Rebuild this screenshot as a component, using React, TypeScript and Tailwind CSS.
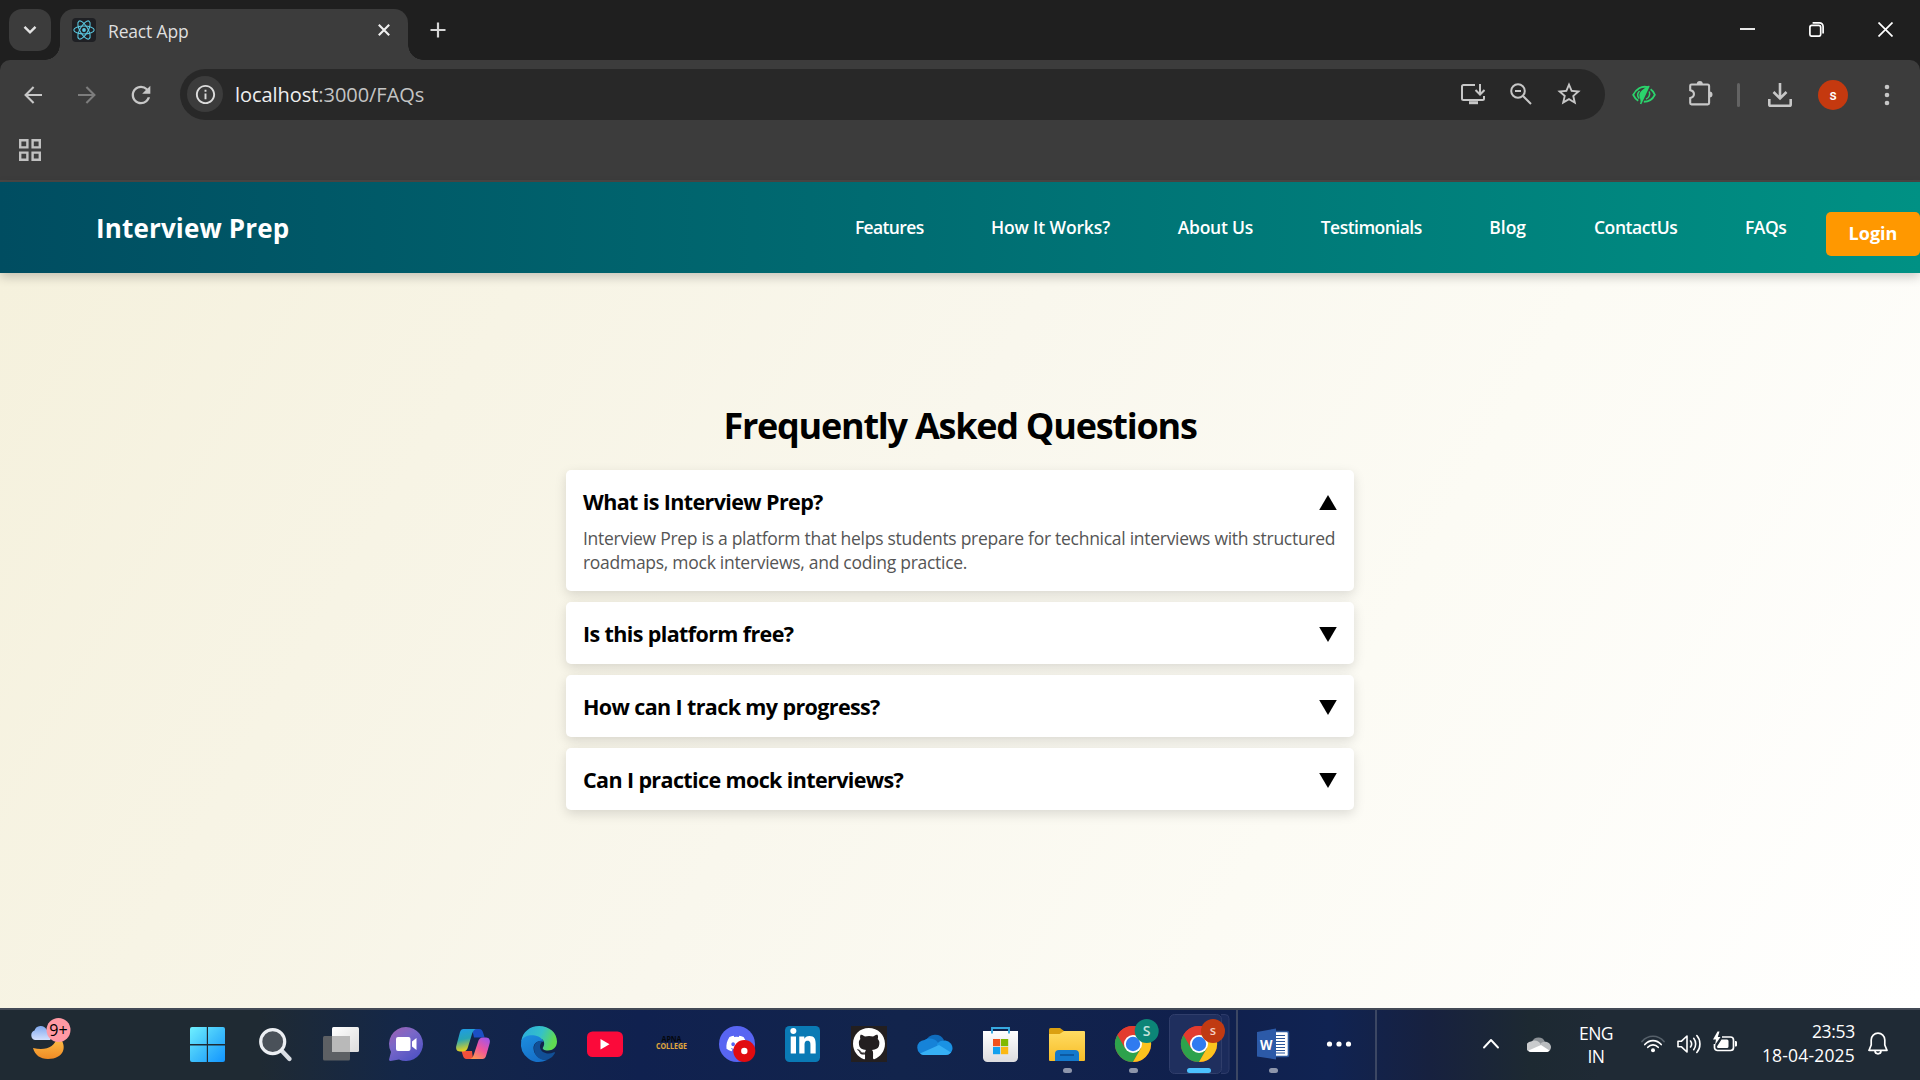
import React, { useState } from "react";
import { FaGithub, FaDiscord, FaLinkedinIn } from "react-icons/fa6";
import { MdStarBorder, MdRefresh, MdOutlineInfo } from "react-icons/md";

function ReactLogo() {
  return (
    <svg viewBox="0 0 24 24" className="h-6 w-6 rounded-sm bg-[#1f2024]" fill="none" stroke="#5ac8e0" strokeWidth="1.1">
      <ellipse cx="12" cy="12" rx="10.2" ry="4" />
      <ellipse cx="12" cy="12" rx="10.2" ry="4" transform="rotate(60 12 12)" />
      <ellipse cx="12" cy="12" rx="10.2" ry="4" transform="rotate(120 12 12)" />
      <circle cx="12" cy="12" r="1.9" fill="#5ac8e0" stroke="none" />
    </svg>
  );
}

function TabStrip() {
  return (
    <div className="flex h-[60px] items-start bg-[#1f1f1f]">
      <button className="mt-[9px] ml-[9px] flex h-[42px] w-[42px] items-center justify-center rounded-[13px] bg-[#3c3c3c]">
        <svg viewBox="0 0 14 10" className="h-[10px] w-[14px]" fill="none" stroke="#e3e3e3" strokeWidth="2.4">
          <path d="M1.5 1.8 7 7.3l5.5-5.5" />
        </svg>
      </button>
      <div className="relative mt-[9px] ml-[9px] flex h-[51px] w-[348px] items-start rounded-t-[14px] bg-[#3c3c3c] pt-[9px] pl-3">
        <span className="absolute bottom-0 -left-[15px] h-[15px] w-[15px] bg-[radial-gradient(circle_at_0_0,transparent_14.5px,#3c3c3c_15px)]" />
        <span className="absolute -right-[15px] bottom-0 h-[15px] w-[15px] bg-[radial-gradient(circle_at_100%_0,transparent_14.5px,#3c3c3c_15px)]" />
        <ReactLogo />
        <span className="mt-[1px] ml-3 w-[240px] text-[17.5px] leading-6 tracking-[-0.17px] whitespace-nowrap text-[#dfdfdf]">React App</span>
        <svg viewBox="0 0 12 12" className="mt-[6px] ml-[30px] h-3 w-3" stroke="#f0f0f0" strokeWidth="2.1">
          <path d="M.8.8l10.4 10.4M11.2.8.8 11.2" />
        </svg>
      </div>
      <svg viewBox="0 0 16 16" className="mt-[22px] ml-[22px] h-4 w-4" stroke="#d6d6d6" strokeWidth="2.2">
        <path d="M8 .5v15M.5 8h15" />
      </svg>
      <div className="mt-[22px] mr-[27px] ml-auto flex gap-[54px]">
        <svg viewBox="0 0 15 15" className="h-[15px] w-[15px]" stroke="#fff" strokeWidth="1.8"><path d="M0 7h15" /></svg>
        <svg viewBox="0 0 15 15" className="h-[15px] w-[15px]" fill="none" stroke="#fff" strokeWidth="1.7">
          <rect x=".9" y="3.4" width="10.8" height="10.8" rx="2" />
          <path d="M3.6.9h6.9a3.6 3.6 0 0 1 3.6 3.6v7" />
        </svg>
        <svg viewBox="0 0 15 15" className="h-[15px] w-[15px]" stroke="#fff" strokeWidth="1.7"><path d="M.5.5l14 14M14.5.5l-14 14" /></svg>
      </div>
    </div>
  );
}

function Toolbar() {
  return (
    <div className="bg-[#1f1f1f]">
      <div className="flex h-[70px] items-start rounded-t-[10px] bg-[#3c3c3c] pt-[9px]">
        <svg viewBox="0 0 18 18" className="mt-[17px] ml-6 h-[18px] w-[18px]" fill="none" stroke="#c7c7c7" strokeWidth="2.1">
          <path d="M18 9H2M9.6 1 1.6 9l8 8" />
        </svg>
        <svg viewBox="0 0 18 18" className="mt-[17px] ml-9 h-[18px] w-[18px]" fill="none" stroke="#7d7d7d" strokeWidth="2.1">
          <path d="M0 9h16M8.4 1l8 8-8 8" />
        </svg>
        <MdRefresh className="mt-[12px] ml-[31px] h-[28px] w-[28px] text-[#c7c7c7]" />
        <div className="ml-[25px] flex h-[51px] w-[1425px] items-start rounded-full bg-[#282828]">
          <div className="mt-[7px] ml-[7px] flex h-9 w-9 items-center justify-center rounded-full bg-[#3c3c3c]">
            <MdOutlineInfo className="h-[23px] w-[23px] text-[#dcdcdc]" />
          </div>
          <span className="mt-[11px] ml-[12px] w-[1216px] text-[20px] leading-[30px] tracking-[-0.05px] whitespace-nowrap text-[#c4c4c4]">
            <span className="text-[#efefef]">localhost</span>:3000/FAQs
          </span>
          <svg viewBox="0 0 24 22" className="mt-[14px] ml-[10px] h-[22px] w-6 shrink-0" fill="none" stroke="#c7c7c7" strokeWidth="2">
            <path d="M14 2H2.5A1.5 1.5 0 0 0 1 3.5v12A1.5 1.5 0 0 0 2.5 17h19a1.5 1.5 0 0 0 1.5-1.5V13" />
            <path d="M8 19.7h9" strokeWidth="3" />
            <path d="M19 1v10M14.5 7l4.5 4.5L23.5 7" />
          </svg>
          <svg viewBox="0 0 22 22" className="mt-[14px] ml-[25px] h-[22px] w-[22px] shrink-0" fill="none" stroke="#c7c7c7" strokeWidth="2">
            <circle cx="8" cy="8" r="6.8" />
            <path d="M5 8h6M13 13l8 8" />
          </svg>
          <MdStarBorder className="mt-[11px] ml-[23px] h-[28px] w-[28px] shrink-0 text-[#c7c7c7]" />
        </div>
        <svg viewBox="0 0 24 20" className="mt-[16px] ml-[27px] h-5 w-6" fill="none" stroke="#2bd46c" strokeWidth="1.9">
          <path d="M16 2.2C9.5.2 3.8 4.4 1.2 9.8c1.3 2.7 3 4.700 5 6" />
          <path d="M7.5 6c-2.3 2.6-2.2 5.6-.2 7.6" strokeWidth="1.5" />
          <path d="M17.3.6 9 18.4 8 13C5.8 8.5 9.5 4.5 17.3.6Z" fill="#2bd46c" stroke="none" />
          <path d="M18.6 4.3c2 1.3 3.4 3.2 4.2 5.5-2.2 4.4-6.2 7-11 7" />
          <path d="M17.2 6.5c1.3 3-.3 6.4-3.2 7.6" strokeWidth="1.5" />
          <path d="M17 1 8.6 19" strokeWidth="1.6" />
        </svg>
        <svg viewBox="0 0 26 26" className="mt-[11px] ml-[32px] h-[26px] w-[26px]" fill="none" stroke="#c7c7c7" strokeWidth="2.1">
          <path d="M3.5 4.500h16a1.6 1.6 0 0 1 1.600 1.600v17a1.300 1.300 0 0 1-1.300 1.300H3.500a1.300 1.300 0 0 1-1.300-1.300v-5c5-1 5-7 0-8V5.800A1.300 1.300 0 0 1 3.500 4.500Z" />
          <path d="M8.800 4a3 3 0 0 1 6 0ZM21.500 11.500a3 3 0 0 1 0 6Z" fill="#c7c7c7" stroke="none" />
        </svg>
        <div className="mt-[14px] ml-[23px] h-6 w-[3px] rounded-sm bg-[#636363]" />
        <svg viewBox="0 0 24 24" className="mt-[14px] ml-[28px] h-6 w-6" fill="none" stroke="#c7c7c7" strokeWidth="2.6">
          <path d="M12 0v15M5.500 9l6.500 6.500L18.500 9M1.300 16v5.400a1.300 1.300 0 0 0 1.300 1.300h18.800a1.300 1.300 0 0 0 1.300-1.300V16" />
        </svg>
        <div className="mt-[11px] ml-[26px] flex h-[30px] w-[30px] items-center justify-center rounded-full bg-[#c5390f] font-[Roboto,sans-serif] text-[14px] font-medium text-white">s</div>
        <svg viewBox="0 0 6 22" className="mt-[15px] ml-9 h-[22px] w-[6px]" fill="#c7c7c7">
          <circle cx="3" cy="3" r="2.300" /><circle cx="3" cy="11" r="2.300" /><circle cx="3" cy="19" r="2.300" />
        </svg>
      </div>
      <div className="flex h-[52px] items-start border-b-2 border-[#4a4644] bg-[#3c3c3c] pt-[9px] pl-[19px]">
        <svg viewBox="0 0 22 22" className="h-[22px] w-[22px]" fill="none" stroke="#c0c0c0" strokeWidth="2.4">
          <path d="M1.200 1.200h7.200v7.200H1.200zM13.600 1.200h7.200v7.200h-7.200zM1.200 13.600h7.200v7.200H1.200zM13.600 13.600h7.200v7.200h-7.200z" />
        </svg>
      </div>
    </div>
  );
}

const links = [
  { label: "Features", box: "w-[68.5px] tracking-[-0.64px]" },
  { label: "How It Works?", box: "w-[119px] tracking-[-0.14px]" },
  { label: "About Us", box: "w-[75.5px] tracking-[-0.22px]" },
  { label: "Testimonials", box: "w-[101px] tracking-[-0.52px]" },
  { label: "Blog", box: "w-[37px] tracking-[-0.05px]" },
  { label: "ContactUs", box: "w-[83.5px] tracking-[-0.4px]" },
  { label: "FAQs", box: "w-[41px] tracking-[-0.5px]" },
];

function SiteNav() {
  return (
    <nav className="relative flex h-[91px] items-start bg-linear-to-r from-[#004d61] to-[#009184] text-white shadow-[0_4px_10px_rgba(0,0,0,0.2)]">
      <div className="mt-[28px] ml-[96px] text-[26px] leading-9 font-bold tracking-[0.15px] whitespace-nowrap">Interview Prep</div>
      <div className="ml-auto flex gap-[67.6px]">
        {links.map((l) => (
          <a key={l.label} href="#" className={"mt-[33px] text-[17.5px] leading-6 font-semibold whitespace-nowrap " + l.box}>{l.label}</a>
        ))}
      </div>
      <button className="mt-[30px] ml-[40px] flex h-11 w-[94px] justify-center rounded-[5px] bg-[#ff9800] pt-[9px] text-[18px] leading-6 font-bold">Login</button>
    </nav>
  );
}

const faqs = [
  { q: "What is Interview Prep?", a: "Interview Prep is a platform that helps students prepare for technical interviews with structured roadmaps, mock interviews, and coding practice." },
  { q: "Is this platform free?", a: "Yes, the core roadmaps and practice sets are free." },
  { q: "How can I track my progress?", a: "Your dashboard shows progress through every roadmap." },
  { q: "Can I practice mock interviews?", a: "Yes, mock interviews can be scheduled at any time." },
];

function Faqs() {
  const [open, setOpen] = useState(0);
  return (
    <main className="flex h-[735px] flex-col items-center bg-[linear-gradient(120deg,#f5f1dd_0%,#f9f7ed_45%,#fcfbf4_68%,#ffffff_100%)] pt-[126px]">
      <h1 className="h-[71px] text-[36px] leading-[54px] font-bold tracking-[-1.25px] [font-stretch:90%] whitespace-nowrap text-black">Frequently Asked Questions</h1>
      <div className="flex w-[788px] flex-col gap-[11px]">
        {faqs.map((f, i) => (
          <section key={f.q} className="rounded-[5px] bg-white px-[17px] pt-[17px] pb-[15px] shadow-[0_4px_12px_rgba(0,0,0,0.13)]">
            <button onClick={() => setOpen(open === i ? -1 : i)} className="flex h-[30px] w-full items-center justify-between text-left text-black">
              <span className="text-[21.5px] leading-[30px] font-bold tracking-[-0.62px] whitespace-nowrap">{f.q}</span>
              <svg viewBox="0 0 18 15" className={open === i ? "h-[15px] w-[18px]" : "h-[15px] w-[18px] rotate-180"}>
                <path d="M9 0 17.800 15H.200Z" />
              </svg>
            </button>
            {open === i && (
              <p className="mt-[9px] mb-[2px] -mr-2 text-[17.5px] leading-6 tracking-[-0.28px] text-[#555]">{f.a}</p>
            )}
          </section>
        ))}
      </div>
    </main>
  );
}

function Cell({ children }: { children: React.ReactNode }) {
  return <svg viewBox="0 0 66 70" className="h-[70px] w-[66px] shrink-0 font-['Open_Sans',sans-serif]">{children}</svg>;
}

function ChromeIcon() {
  return (
    <g transform="translate(34 34)">
      <circle r="18" fill="#e33b2e" />
      <path d="M0 0-15.600-9A18 18 0 0 0 0 18L7.800 4.500Z" fill="#2da24c" />
      <path d="M0-9H15.600A18 18 0 0 1 0 18L7.800 4.500Z" fill="#fcc31e" />
      <path d="M-15.600-9A18 18 0 0 1 15.600-9H0L-7.800 4.500Z" fill="#e33b2e" />
      <circle r="9" fill="#fff" />
      <circle r="7.200" fill="#2f7bf0" />
    </g>
  );
}

function Taskbar() {
  return (
    <footer className="flex h-[72px] items-start border-t-2 border-[#434a56] bg-[linear-gradient(90deg,#1f2a33_0px,#1f2a33_260px,#142748_400px,#10214f_640px,#12244c_900px,#10204d_1200px,#102352_1330px,#17213f_1430px,#1d2932_1530px,#1f2a35_1600px)]">
      <svg viewBox="0 0 175 70" className="h-[70px] w-[175px] shrink-0 font-['Open_Sans',sans-serif]">
        <defs>
          <linearGradient id="moon" x2="0" y2="1"><stop stopColor="#ffc24a" /><stop offset="1" stopColor="#f08a24" /></linearGradient>
          <linearGradient id="cloud" x2="0" y2="1"><stop stopColor="#7fa8ee" /><stop offset="1" stopColor="#d3dffc" /></linearGradient>
        </defs>
        <path d="M59 27c9 9 5 22-11 22-8 0-13-4-15-11 13 3 22-1 24-11Z" fill="url(#moon)" />
        <path d="M35 30a5 5 0 0 1-.5-9.500 6.500 6.500 0 0 1 12-1A6 6 0 0 1 50 30Z" fill="url(#cloud)" />
        <circle cx="58.500" cy="20" r="12" fill="#ff99a4" />
        <text x="58.500" y="25.500" fontSize="16" textAnchor="middle" fill="#000">9+</text>
      </svg>
      <Cell>
        <defs><linearGradient id="win" gradientUnits="userSpaceOnUse" x1="15" y1="17" x2="50" y2="52"><stop stopColor="#6ff0ff" /><stop offset=".5" stopColor="#3fc0fb" /><stop offset="1" stopColor="#1295ff" /></linearGradient></defs>
        <path d="M17 17h14.800v17H15V19a2 2 0 0 1 2-2ZM33 17h15a2 2 0 0 1 2 2v15H33ZM15 35.500h16.800V52H17a2 2 0 0 1-2-2ZM33 35.500h17V50a2 2 0 0 1-2 2H33Z" fill="url(#win)" />
      </Cell>
      <Cell>
        <path d="m41 41 7.500 8" stroke="#d9dee4" strokeWidth="4.400" strokeLinecap="round" />
        <circle cx="31.700" cy="31.700" r="12" fill="#4a5159" stroke="#eceff3" strokeWidth="3.200" />
      </Cell>
      <Cell>
        <defs><linearGradient id="tv" x2="1" y2="1"><stop stopColor="#fff" /><stop offset="1" stopColor="#dcdcdc" /></linearGradient></defs>
        <rect x="16" y="26" width="27" height="24.500" rx="1.500" fill="#5d6064" />
        <rect x="25" y="17" width="27" height="25" rx="1.500" fill="url(#tv)" />
        <path d="M25 26h18v16H25z" fill="#b9b9b9" />
      </Cell>
      <Cell>
        <defs><linearGradient id="chat" x1="0" x2=".7" y2="1"><stop stopColor="#a05fb0" /><stop offset=".45" stopColor="#7a68c8" /><stop offset="1" stopColor="#4f52c4" /></linearGradient></defs>
        <path d="M33 17a17 17 0 1 1-7 32.500L17.500 51c-1 0-1.700-.7-1.400-1.700L18 42A17 17 0 0 1 33 17Z" fill="url(#chat)" />
        <rect x="23" y="27" width="14.500" height="14" rx="2" fill="#fff" />
        <path d="M39 31.500 43.500 28v12L39 36.500Z" fill="#fff" />
      </Cell>
      <Cell>
        <defs>
          <linearGradient id="cpa" x2=".2" y2="1"><stop stopColor="#1e9bea" /><stop offset=".5" stopColor="#28a5b5" /><stop offset="1" stopColor="#e5d21e" /></linearGradient>
          <linearGradient id="cpb" x1=".8" x2=".2" y2="1"><stop stopColor="#a455e8" /><stop offset=".5" stopColor="#f0569b" /><stop offset="1" stopColor="#fd9a4e" /></linearGradient>
        </defs>
        <path d="M33 19h7c2.500 0 3.500 1.600 4 3.500l1.700 5H35Z" fill="#1b4fc4" />
        <path d="M34 49h-6.500c-2 0-3-1.500-3.600-3.500L22.500 41H33Z" fill="#f0503c" />
        <path d="M24.500 19H38c-3 0-4 2-5 5l-4 13c-.9 2.800-2 4.500-5 4.500h-3c-3.500 0-4.500-3-3.600-6L21 22c.7-2 1.700-3 3.500-3Z" fill="url(#cpa)" />
        <path d="M43.500 49H30c3 0 4-2 5-5l4-12c.9-2.800 2-4.500 5-4.500h3c3.500 0 4.500 3 3.600 6L47 46c-.7 2-1.700 3-3.500 3Z" fill="url(#cpb)" />
      </Cell>
      <Cell>
        <defs>
          <linearGradient id="eda" x2="1" y2=".3"><stop stopColor="#2aa9e0" /><stop offset=".6" stopColor="#35c1c8" /><stop offset="1" stopColor="#5fdb52" /></linearGradient>
          <linearGradient id="edb" x2=".5" y2="1"><stop stopColor="#1c8fe0" /><stop offset="1" stopColor="#1670c8" /></linearGradient>
        </defs>
        <path d="M16.300 31C17.500 22 25 16 34 16c10.500 0 18 7 18 15.500 0 6-4.500 9-9 9-4 0-6-1.500-5-3 2.500-4 1-9-4-9-8 0-12 2-17.700 2.500Z" fill="url(#eda)" />
        <path d="M16.200 31C18 26 25 24.500 30 25.500c5 1 8 4 8.500 6.500-5-2-10 1-10 6 0 8 8 12 13.500 12A18 18 0 0 1 16.200 31Z" fill="url(#edb)" />
        <path d="M38 31c-5-1-8.500 2-9 6.500C28.500 46 36 52 43 49.500c3-1.300 5.500-3.500 7-6.500.3-.7-.4-1-1-.7C43 45 36 43 35 37.500c-.3-2.500.8-5 3-6.500Z" fill="#114f96" />
      </Cell>
      <Cell>
        <rect x="16" y="21.500" width="36" height="25.500" rx="5.500" fill="#fb0a3a" />
        <path d="M29.500 29v10.500l9-5.200Z" fill="#fff" />
      </Cell>
      <Cell>
        <text x="34.500" y="32" fontSize="9" fontWeight="700" textAnchor="middle" fill="#05070c" textLength="20" lengthAdjust="spacingAndGlyphs">APNA</text>
        <text x="34.500" y="39" fontSize="9.500" fontWeight="700" textAnchor="middle" fill="#e2a83a" textLength="31" lengthAdjust="spacingAndGlyphs">COLLEGE</text>
      </Cell>
      <Cell>
        <circle cx="34" cy="34" r="18" fill="#5865f2" />
        <FaDiscord x="22.500" y="22.500" size="22" color="#fff" />
        <circle cx="41.300" cy="41" r="11" fill="#e10b10" />
        <circle cx="41.300" cy="41" r="3.200" fill="#fff" />
      </Cell>
      <Cell>
        <rect x="16" y="16" width="35" height="36" rx="4.500" fill="#0a7ab5" />
        <FaLinkedinIn x="19.500" y="18" size="29" color="#fff" />
      </Cell>
      <Cell>
        <path d="M16 16h36v36H16z" fill="#231f20" />
        <FaGithub x="17.500" y="17.500" size="33" color="#fff" />
      </Cell>
      <Cell>
        <path d="M25 31a10 10 0 0 1 18-1l-8 10Z" fill="#0f6cbd" />
        <path d="M24 45a7.500 7.500 0 0 1-.5-15c5-3 10.500-1 13 2L44 45Z" fill="#1683d8" />
        <path d="M36 34c4-6 15-4 15.500 4 0 4-3 7-7 7H35Z" fill="#1a92e4" />
        <path d="M19 43.500 38 35l12 7.500c-1.500 1.700-3.500 2.500-5.500 2.500H24c-2 0-3.700-.4-5-1.500Z" fill="#36b0f5" />
      </Cell>
      <Cell>
        <defs><linearGradient id="bag" x2="0" y2="1"><stop stopColor="#fff" /><stop offset="1" stopColor="#dcdcdf" /></linearGradient></defs>
        <path d="M16 21h35v26.500a4.500 4.500 0 0 1-4.500 4.500h-26a4.500 4.500 0 0 1-4.500-4.500Z" fill="url(#bag)" />
        <path d="M25 23.500V18h17v5.500" fill="none" stroke="#37a9e0" strokeWidth="1.900" />
        <path d="M26 29h7.200v7.200H26z" fill="#f1511b" /><path d="M34 29h7.200v7.200H34z" fill="#80b900" />
        <path d="M26 37h7.200v7.200H26z" fill="#12a0ee" /><path d="M34 37h7.200v7.200H34z" fill="#fbb813" />
      </Cell>
      <Cell>
        <defs><linearGradient id="fold" x2="0" y2="1"><stop stopColor="#ffdc62" /><stop offset="1" stopColor="#f7bd28" /></linearGradient></defs>
        <path d="M16 19.500a1.500 1.500 0 0 1 1.500-1.500H27l4 3v5H16Z" fill="#dba011" />
        <path d="M16 24h10.500l4.500-3h20a1 1 0 0 1 1 1v28a1 1 0 0 1-1 1H17a1 1 0 0 1-1-1Z" fill="url(#fold)" />
        <path d="M22 51v-7a4 4 0 0 1 4-4h16a4 4 0 0 1 4 4v7Z" fill="#1479cc" />
        <path d="M27 45h14" stroke="#0a4c8f" strokeWidth="1.400" />
        <rect x="30" y="58" width="9" height="5" rx="2.500" fill="#8e96ab" />
      </Cell>
      <Cell>
        <ChromeIcon />
        <circle cx="47.700" cy="21" r="12" fill="#0c8577" />
        <text x="47.700" y="26" fontSize="14" fontWeight="600" textAnchor="middle" fill="#c3e3dd">S</text>
        <rect x="30" y="58" width="9" height="5" rx="2.500" fill="#8e96ab" />
      </Cell>
      <Cell>
        <path d="M56 4.500h4a4 4 0 0 1 4 4v51a4 4 0 0 1-4 4h-4" fill="#1b2b5b" stroke="#2c3a68" strokeWidth="1" />
        <rect x="4.500" y="4.500" width="52" height="59" rx="5" fill="#1f2f5e" stroke="#303e6b" />
        <ChromeIcon />
        <circle cx="48" cy="21" r="12" fill="#c03a12" />
        <text x="48" y="25" fontSize="13" fontWeight="600" textAnchor="middle" fill="#f3cfc4">s</text>
        <rect x="22" y="58" width="24" height="5" rx="2.500" fill="#4cc2ff" />
      </Cell>
      <div className="ml-[5px] h-[70px] w-[2px] bg-[#3c4763]" />
      <Cell>
        <rect x="34" y="21.500" width="16.500" height="25" rx="1.500" fill="#fff" stroke="#2b579a" strokeWidth="1.600" />
        <path d="M37 25.500h10M37 28.500h10M37 31.500h10M37 34.500h10M37 37.500h10M37 40.500h10M37 43h10" stroke="#2b579a" strokeWidth="1.200" />
        <path d="M19 22 38 18.500v31L19 46.500Z" fill="#2c5aa8" />
        <text x="28.200" y="39.500" fontSize="14.500" fontWeight="700" textAnchor="middle" fill="#fff" textLength="12.500" lengthAdjust="spacingAndGlyphs">W</text>
        <rect x="31" y="58" width="9" height="5" rx="2.500" fill="#8e96ab" />
      </Cell>
      <svg viewBox="0 0 71 70" className="h-[70px] w-[71px] shrink-0" fill="#fff">
        <circle cx="25.500" cy="34" r="2.600" /><circle cx="35" cy="34" r="2.600" /><circle cx="44.500" cy="34" r="2.600" />
      </svg>
      <div className="h-[70px] w-[2px] bg-[#3c4763]" />
      <svg viewBox="0 0 18 11" className="mt-[28px] ml-[105px] h-[11px] w-[18px] shrink-0" fill="none" stroke="#fff" strokeWidth="1.900" strokeLinecap="round" strokeLinejoin="round">
        <path d="M2 9.500 9 2l7 7.500" />
      </svg>
      <svg viewBox="0 0 24 16" className="mt-[26px] ml-[27px] h-4 w-6 shrink-0">
        <path d="M5 6a7 7 0 0 1 13 0l-5 5Z" fill="#8d9297" />
        <path d="M4.500 16A5 5 0 0 1 4 5.500C8 3.500 12 5 13.500 8L16 16Z" fill="#c9cbcd" />
        <path d="M13 8.500C15 4 23.500 5 24 11c0 3-2.500 5-5 5H12Z" fill="#b9bcbf" />
        <path d="M1.500 14.500 14 9l8.500 5.500c-1 1-2.200 1.500-3.500 1.500H5c-1.500 0-2.700-.5-3.500-1.500Z" fill="#fff" />
      </svg>
      <div className="mt-[12px] ml-[24px] w-[42px] text-center text-[17.5px] leading-[23px] tracking-[-0.5px] text-white">
        <div>ENG</div>
        <div>IN</div>
      </div>
      <svg viewBox="0 0 24 18" className="mt-[25px] ml-[24px] h-[18px] w-6 shrink-0" fill="none" stroke="#fff" strokeWidth="1.700" strokeLinecap="round">
        <path d="M1 6.500c6-7 16-7 22 0" stroke="#56606a" />
        <path d="M3.800 9.500c4.500-5.300 11.900-5.300 16.400 0M6.800 12.300c2.900-3.300 7.500-3.300 10.400 0" />
        <circle cx="12" cy="15.200" r="2" fill="#fff" stroke="none" />
      </svg>
      <svg viewBox="0 0 24 20" className="mt-[24px] ml-3 h-5 w-6 shrink-0" fill="none" stroke="#fff" strokeWidth="1.600" strokeLinecap="round" strokeLinejoin="round">
        <path d="M1 7.200v5.600h3.500L10 18V2L4.500 7.200ZM13.500 7c1.300 1.700 1.300 4.300 0 6M16.700 4.300c2.600 3.200 2.600 8.200 0 11.400M19.800 1.500c4.200 4.700 4.200 12.300 0 17" />
      </svg>
      <svg viewBox="0 0 24 21" className="mt-[21px] ml-3 h-[21px] w-6 shrink-0">
        <path d="M9 6h8.500a3 3 0 0 1 3 3v7.500a3 3 0 0 1-3 3h-13a3 3 0 0 1-3-3V13" fill="none" stroke="#fff" strokeWidth="1.700" />
        <path d="M8.500 8.500H14a1.500 1.500 0 0 1 1.500 1.500v5.500A1.500 1.500 0 0 1 14 17H4.500L4 15.500Z" fill="#fff" />
        <path d="M22 10h.700c.700 0 1.300.6 1.300 1.300v3c0 .7-.6 1.300-1.300 1.300H22ZM4.500.5 0 8.500h3L2 14l5.500-8H4.800L6.500.5Z" fill="#fff" />
      </svg>
      <div className="mt-[9px] ml-[12px] w-[106px] text-right text-[17.5px] leading-6 whitespace-nowrap text-white">
        <div className="tracking-[-0.3px]">23:53</div>
        <div className="tracking-[0.18px]">18-04-2025</div>
      </div>
      <svg viewBox="0 0 20 23" className="mt-[22px] ml-[13px] h-[23px] w-5 shrink-0" fill="none" stroke="#fff" strokeWidth="1.700" strokeLinejoin="round">
        <path d="M10 1.200a6.800 6.800 0 0 0-6.800 6.800v5L1 18.300h18L16.800 13V8A6.800 6.800 0 0 0 10 1.200ZM7 18.800a3 3 0 0 0 6 0" />
      </svg>
    </footer>
  );
}

export default function App() {
  return (
    <div className="flex h-[1080px] w-[1920px] flex-col overflow-hidden font-['Open_Sans','Noto_Sans',sans-serif]">
      <TabStrip />
      <Toolbar />
      <SiteNav />
      <Faqs />
      <Taskbar />
    </div>
  );
}
